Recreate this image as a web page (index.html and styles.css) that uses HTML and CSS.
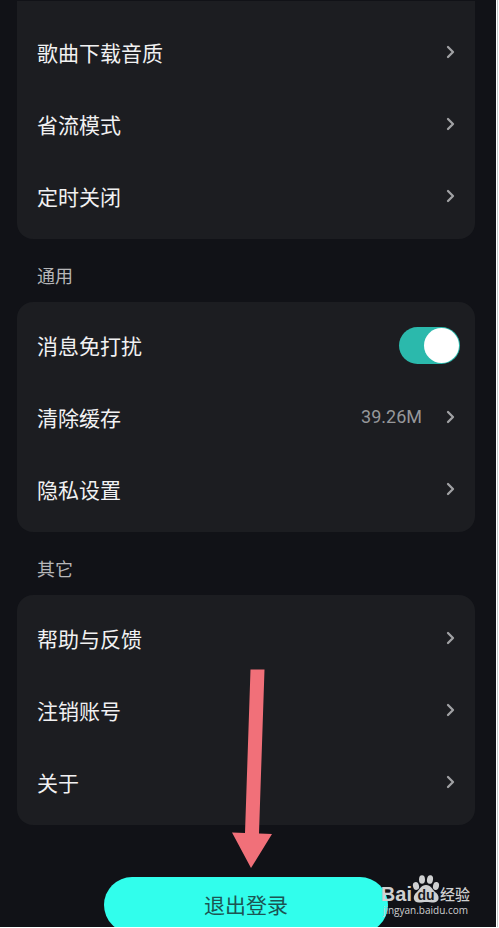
FILE: index.html
```html
<!DOCTYPE html>
<html lang="zh-CN">
<head>
<meta charset="utf-8">
<meta name="viewport" content="width=device-width, initial-scale=1">
<title>设置</title>
<link rel="stylesheet" href="styles.css">
</head>
<body>
<svg class="defs" aria-hidden="true"><symbol id="chevron" viewBox="0 0 10 14"><path d="M2 2l5 5-5 5" fill="none" stroke="currentColor" stroke-width="2.300" stroke-linecap="round" stroke-linejoin="round"/></symbol></svg>
<main class="screen">
  <section class="card card-first">
    <a class="row" href="#quality"><span>歌曲下载音质</span><svg class="chevron"><use href="#chevron"/></svg></a>
    <a class="row" href="#saver"><span>省流模式</span><svg class="chevron"><use href="#chevron"/></svg></a>
    <a class="row" href="#timer"><span>定时关闭</span><svg class="chevron"><use href="#chevron"/></svg></a>
  </section>
  <h2 class="heading">通用</h2>
  <section class="card">
    <label class="row" for="mute"><span>消息免打扰</span><input class="switch" id="mute" type="checkbox" role="switch" checked></label>
    <a class="row" href="#cache"><span>清除缓存</span><span class="value">39.26M</span><svg class="chevron"><use href="#chevron"/></svg></a>
    <a class="row" href="#privacy"><span>隐私设置</span><svg class="chevron"><use href="#chevron"/></svg></a>
  </section>
  <h2 class="heading">其它</h2>
  <section class="card">
    <a class="row" href="#help"><span>帮助与反馈</span><svg class="chevron"><use href="#chevron"/></svg></a>
    <a class="row" href="#delete"><span>注销账号</span><svg class="chevron"><use href="#chevron"/></svg></a>
    <a class="row" href="#about"><span>关于</span><svg class="chevron"><use href="#chevron"/></svg></a>
  </section>
  <div class="actions">
    <button class="logout" type="button">退出登录</button>
    <svg class="arrow" viewBox="0 0 40 200" aria-hidden="true"><path d="M18.500 1.500H32.500L27 165.500L40 166L19 200L0 164.500L13 165Z" fill="#f17079"/></svg>
    <div class="watermark">
      <div class="brand"><span>Bai</span><svg class="paw" viewBox="0 0 28 28" aria-hidden="true"><g fill="currentColor"><ellipse cx="4" cy="11" rx="3" ry="4" transform="rotate(-15 4 11)"/><ellipse cx="10" cy="4.500" rx="3" ry="4.300"/><ellipse cx="18" cy="4.500" rx="3" ry="4.300" transform="rotate(8 18 4.500)"/><ellipse cx="24" cy="11" rx="3" ry="4" transform="rotate(12 24 11)"/><path d="M14 10C9 10 8 14 5 17C0 21 1 27.500 7 27.500C10 27.500 12 27 14 27C17 27 19 27.500 22 27.500C28 27 28 20 23 17C20 14 19 10 14 10Z"/></g><text class="du" x="14" y="25" text-anchor="middle">du</text></svg><span class="brand-cn">经验</span></div>
      <div class="site">jingyan.baidu.com</div>
    </div>
  </div>
</main>
</body>
</html>
```
FILE: styles.css
```css
* { box-sizing: border-box; }
html { background: #fff; }
body {
  margin: 0;
  height: 100vh;
  overflow: hidden;
  color: #f1f1f2;
  font-family: "Noto Sans CJK SC", sans-serif;
  font-size: 21px;
  line-height: 32px;
}
.defs { position: absolute; width: 0; height: 0; }
.screen {
  height: calc(100vh - 1px);
  margin-right: 3px;
  padding: 1px 21px 0 17px;
  background: #111217;
  overflow: hidden;
  box-shadow: 1px 0 0 #fff, 2px 0 0 #c9c9cb;
}
.card { padding: 7px 0; border-radius: 16px; background: #1c1d21; }
.card-first { padding-top: 15px; border-radius: 0 0 16px 16px; }
.row {
  display: flex;
  align-items: center;
  height: 72px;
  padding: 0 19px 0 20px;
  color: inherit;
  text-decoration: none;
}
.row > :first-child { margin-right: auto; }
.chevron { width: 10px; height: 14px; color: #a0a1a4; }
.value { margin-right: 24px; color: #96979a; font-family: Roboto, sans-serif; font-size: 18px; }
.heading {
  margin: 0;
  padding: 8px 20px 0;
  height: 63px;
  color: #b6b6b8;
  font-size: 18px;
  font-weight: 400;
  line-height: 56px;
}
.switch {
  appearance: none;
  display: flex;
  justify-content: flex-end;
  width: 61px;
  height: 37px;
  margin: 0 -4px 0 0;
  padding: 1px;
  border-radius: 19px;
  background: #2bb9ac;
}
.switch::before { content: ""; width: 35px; height: 35px; border-radius: 50%; background: #fff; }
.switch:not(:checked) { justify-content: flex-start; background: #55565a; }
.actions { position: relative; display: flex; justify-content: center; padding-top: 52px; }
.logout {
  width: 62%;
  height: 56px;
  padding: 0 0 2px;
  border: 0;
  border-radius: 28px;
  background: #31feec;
  color: #1c5553;
  font: inherit;
}
.arrow { position: absolute; left: 215px; top: -157px; width: 40px; height: 200px; pointer-events: none; }
.watermark {
  position: absolute;
  right: 5px;
  top: 46px;
  color: #cfd0d1;
}
.brand { display: flex; align-items: flex-end; height: 32px; font: bold 20px/18px "Liberation Sans", sans-serif; }
.paw { width: 28px; height: 28px; }
.du { fill: #191a1e; font: bold 14px "Liberation Sans", sans-serif; }
.brand-cn { font: 500 15px/18px "Noto Sans CJK SC", sans-serif; }
.site { font: 10px/14px "Open Sans", sans-serif; text-align: center; white-space: nowrap; }
```
